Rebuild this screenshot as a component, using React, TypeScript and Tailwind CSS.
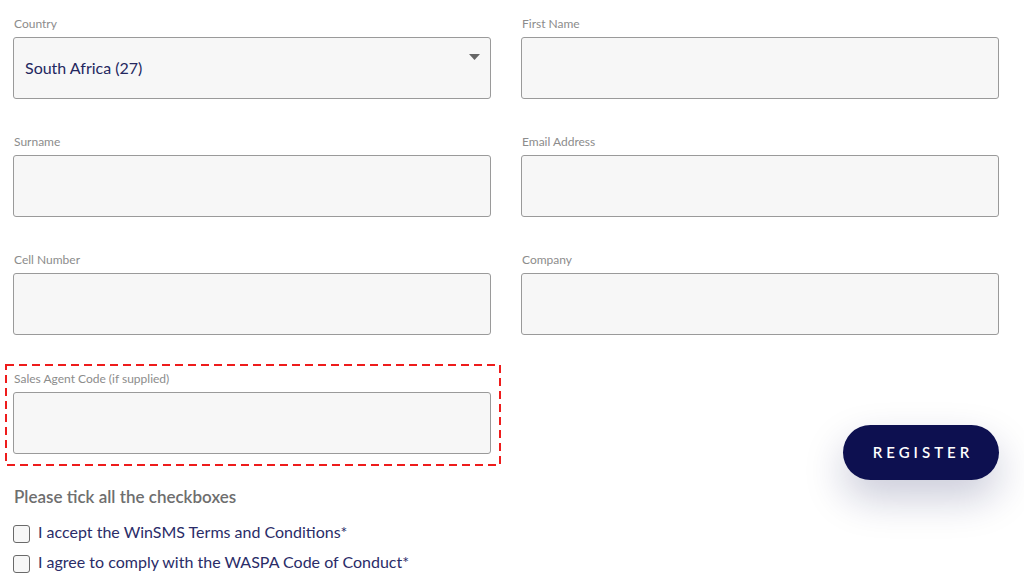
const font = { fontFamily: "Lato, 'Open Sans', sans-serif" };

function Field({ label, value, select }: { label: string; value?: string; select?: boolean }) {
  return (
    <div className="flex flex-col">
      <label className="mb-[5px] pl-px text-[12px] leading-[16px] text-[#8c8c8c]">{label}</label>
      <div className="relative flex h-[62px] items-center rounded-[3px] border border-[#9a9a9a] bg-[#f7f7f7] px-[11px]">
        {value && <span className="text-[16px] text-[#24275f]">{value}</span>}
        {select && (
          <svg className="absolute right-[10px] top-[16px]" width="11" height="6" viewBox="0 0 11 6">
            <path d="M0 0h11L5.5 6z" fill="#666" />
          </svg>
        )}
      </div>
    </div>
  );
}

function Check({ text }: { text: string }) {
  return (
    <div className="flex h-[30px] items-center">
      <span className="mt-[4px] mr-[8px] h-[18px] w-[17px] shrink-0 rounded-[3px] border border-[#6a6a6a] bg-[#f7f7f7]" />
      <span className="text-[16px] text-[#2a2c68]">{text}</span>
    </div>
  );
}

export default function App() {
  return (
    <div className="min-h-[584px] w-[1024px] overflow-hidden bg-white pl-[13px] pt-[16px]" style={font}>
      <div className="grid grid-cols-[478px_478px] gap-x-[30px] gap-y-[35px]">
        <Field label="Country" value="South Africa (27)" select />
        <Field label="First Name" />
        <Field label="Surname" />
        <Field label="Email Address" />
        <Field label="Cell Number" />
        <Field label="Company" />
      </div>

      <div className="mt-[29px] flex items-start">
        {/* highlighted field, dashed outline drawn over it */}
        <div className="relative -ml-[8px] w-[496px] pb-[12px] pl-[8px] pr-[10px] pt-[7px]">
          <svg className="pointer-events-none absolute inset-0" width="496" height="102">
            <rect x="1" y="1" width="494" height="100" fill="none" stroke="#ee1c1c" strokeWidth="2" strokeDasharray="8 5" />
          </svg>
          <Field label="Sales Agent Code (if supplied)" />
        </div>
        <div className="flex w-[498px] justify-end">
          <button className="mt-[61px] h-[55px] w-[156px] rounded-full bg-[#0d1050] pl-[4px] text-[15px] font-semibold tracking-[4px] text-white shadow-[0_18px_40px_rgba(13,16,80,0.22)]">
            REGISTER
          </button>
        </div>
      </div>

      <p className="mt-[7px] pl-px text-[17px] font-semibold leading-[20px] text-[#6e6e6e]">Please tick all the checkboxes</p>
      <div className="mt-[10px]">
        <Check text="I accept the WinSMS Terms and Conditions*" />
        <Check text="I agree to comply with the WASPA Code of Conduct*" />
      </div>
    </div>
  );
}
